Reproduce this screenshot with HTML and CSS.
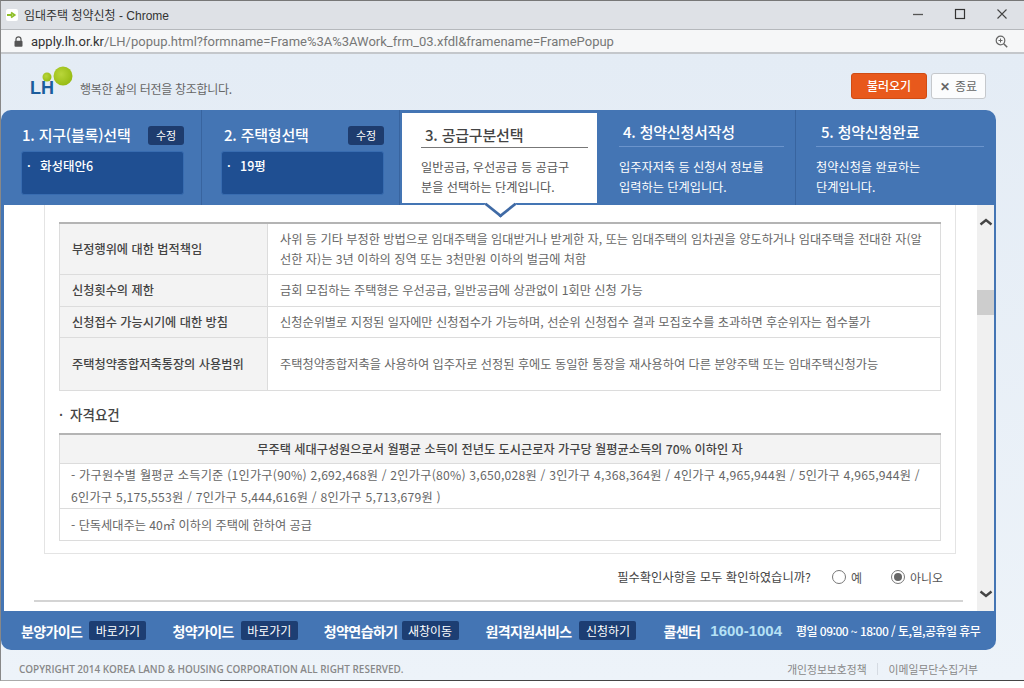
FILE: index.html
```html
<!DOCTYPE html>
<html lang="ko">
<head>
    <meta charset="UTF-8">
    <meta name="viewport" content="width=device-width, initial-scale=1.0">
    <title>임대주택 청약신청 - Chrome</title>
    <link rel="stylesheet" href="styles.css">
</head>
<body>
<div class="window">

    <!-- 타이틀바 -->
    <div class="titlebar">
        <span class="favicon">
            <svg width="10" height="8" viewBox="0 0 10 8"><path d="M0 4h5M4 1.500l3.500 2.500L4 6.500" fill="none" stroke="#8fbf2a" stroke-width="2"/></svg>
        </span>
        <span class="title">임대주택 청약신청 - Chrome</span>
        <div class="winbtns">
            <svg width="12" height="12" viewBox="0 0 12 12"><path d="M1 6.500h10" stroke="#555" stroke-width="1.300"/></svg>
            <svg width="12" height="12" viewBox="0 0 12 12"><rect x="1.500" y="1.500" width="9" height="9" fill="none" stroke="#333" stroke-width="1.200"/></svg>
            <svg width="12" height="12" viewBox="0 0 12 12"><path d="M1.500 1.500l9 9M10.500 1.500l-9 9" stroke="#444" stroke-width="1.100"/></svg>
        </div>
    </div>

    <!-- 주소창 -->
    <div class="addressbar">
        <svg class="lock" width="9" height="11" viewBox="0 0 9 11"><path d="M2 5V3.300a2.500 2.500 0 0 1 5 0V5" fill="none" stroke="#555" stroke-width="1.200"/><rect x="0.500" y="4.800" width="8" height="6" rx="1" fill="#555"/></svg>
        <span class="url"><b>apply.lh.or.kr</b>/LH/popup.html?formname=Frame%3A%3AWork_frm_03.xfdl&amp;framename=FramePopup</span>
        <svg class="zoom" width="13" height="13" viewBox="0 0 13 13"><circle cx="5.500" cy="5.500" r="4.300" fill="none" stroke="#666" stroke-width="1.200"/><path d="M8.700 8.700l3.500 3.500" stroke="#666" stroke-width="1.500"/><path d="M3.500 5.500h4M5.500 3.500v4" stroke="#666"/></svg>
    </div>

    <div class="page">

        <!-- 상단 로고 -->
        <div class="top">
            <div class="logo">
                <svg class="logo-dots" width="34" height="24" viewBox="0 0 34 24">
                    <defs>
                        <radialGradient id="ball" cx="0.400" cy="0.400" r="0.700">
                            <stop offset="0" stop-color="#b9d63a"/>
                            <stop offset="1" stop-color="#93b80f"/>
                        </radialGradient>
                    </defs>
                    <circle cx="5" cy="11" r="4.500" fill="url(#ball)"/>
                    <circle cx="21" cy="10" r="9.500" fill="url(#ball)"/>
                </svg>
                <span class="logo-lh">LH</span>
            </div>
            <span class="slogan">행복한 삶의 터전을 창조합니다.</span>
            <div class="top-btns">
                <span class="btn-load">불러오기</span>
                <span class="btn-close"><i>✕</i>종료</span>
            </div>
        </div>

        <!-- 단계 -->
        <div class="panel">
            <div class="steps">
                <div class="step step-done">
                    <div class="step-head"><h3>1. 지구(블록)선택</h3><span class="edit">수정</span></div>
                    <div class="picked"><span>·</span>화성태안6</div>
                </div>
                <div class="step step-done">
                    <div class="step-head"><h3>2. 주택형선택</h3><span class="edit">수정</span></div>
                    <div class="picked"><span>·</span>19평</div>
                </div>
                <div class="step step-on">
                    <h3>3. 공급구분선택</h3>
                    <p>일반공급, 우선공급 등 공급구<br>분을 선택하는 단계입니다.</p>
                </div>
                <div class="step step-next">
                    <h3>4. 청약신청서작성</h3>
                    <p>입주자저축 등 신청서 정보를<br>입력하는 단계입니다.</p>
                </div>
                <div class="step step-next step-last">
                    <h3>5. 청약신청완료</h3>
                    <p>청약신청을 완료하는<br>단계입니다.</p>
                </div>
            </div>

            <!-- 본문 -->
            <div class="body">
                <div class="scroll">
                    <div class="box">
                        <table class="info">
                            <tr class="r1">
                                <th>부정행위에 대한 법적책임</th>
                                <td>사위 등 기타 부정한 방법으로 임대주택을 임대받거나 받게한 자, 또는 임대주택의 임차권을 양도하거나 임대주택을 전대한 자(알<br>선한 자)는 3년 이하의 징역 또는 3천만원 이하의 벌금에 처함</td>
                            </tr>
                            <tr class="r2">
                                <th>신청횟수의 제한</th>
                                <td>금회 모집하는 주택형은 우선공급, 일반공급에 상관없이 1회만 신청 가능</td>
                            </tr>
                            <tr class="r3">
                                <th>신청접수 가능시기에 대한 방침</th>
                                <td>신청순위별로 지정된 일자에만 신청접수가 가능하며, 선순위 신청접수 결과 모집호수를 초과하면 후순위자는 접수불가</td>
                            </tr>
                            <tr class="r4">
                                <th>주택청약종합저축통장의 사용범위</th>
                                <td>주택청약종합저축을 사용하여 입주자로 선정된 후에도 동일한 통장을 재사용하여 다른 분양주택 또는 임대주택신청가능</td>
                            </tr>
                        </table>

                        <h4><span>·</span>자격요건</h4>

                        <table class="req">
                            <tr class="q1"><th>무주택 세대구성원으로서 월평균 소득이 전년도 도시근로자 가구당 월평균소득의 70% 이하인 자</th></tr>
                            <tr class="q2"><td>- 가구원수별 월평균 소득기준 (1인가구(90%) 2,692,468원 / 2인가구(80%) 3,650,028원 / 3인가구 4,368,364원 / 4인가구 4,965,944원 / 5인가구 4,965,944원 /<br>6인가구 5,175,553원 / 7인가구 5,444,616원 / 8인가구 5,713,679원 )</td></tr>
                            <tr class="q3"><td>- 단독세대주는 40㎡ 이하의 주택에 한하여 공급</td></tr>
                        </table>
                    </div>

                    <div class="confirm">
                        <span class="confirm-q">필수확인사항을 모두 확인하였습니까?</span>
                        <label><span class="radio"></span>예</label>
                        <label><span class="radio radio-on"></span>아니오</label>
                    </div>
                    <div class="rule"></div>
                </div>

                <div class="scrollbar">
                    <svg width="14" height="10" viewBox="0 0 14 10"><path d="M1.500 7.500l5.500-4.500 5.500 4.500" fill="none" stroke="#444" stroke-width="2.400"/></svg>
                    <div class="thumb"></div>
                    <svg class="down" width="14" height="10" viewBox="0 0 14 10"><path d="M1.500 2.500l5.500 4.500 5.500-4.500" fill="none" stroke="#444" stroke-width="2.400"/></svg>
                </div>
            </div>

            <!-- 하단 바 -->
            <div class="guide">
                <b>분양가이드</b><span class="go">바로가기</span>
                <b class="g2">청약가이드</b><span class="go">바로가기</span>
                <b class="g3">청약연습하기</b><span class="go go-near">새창이동</span>
                <b class="g4">원격지원서비스</b><span class="go go-mid">신청하기</span>
                <b class="g5">콜센터</b>
                <strong>1600-1004</strong>
                <em>평일 09:00 ~ 18:00 / 토,일,공휴일 휴무</em>
            </div>
        </div>

        <!-- 카피라이트 -->
        <div class="copy">
            <span class="copy-text">COPYRIGHT 2014 KOREA LAND &amp; HOUSING CORPORATION ALL RIGHT RESERVED.</span>
            <span class="links"><span>개인정보보호정책</span><span class="sep"></span><span>이메일무단수집거부</span></span>
        </div>
    </div>
</div>
</body>
</html>
```

FILE: styles.css
```css
* {
    box-sizing: border-box;
}
html, body {
    margin: 0;
    height: 688px;
    overflow: hidden;
    background-color: #fff;
}
body {
    font-family: "Noto Sans CJK KR", "Liberation Sans", sans-serif;
    font-size: 12px;
    color: #555;
}
h3, h4, p {
    margin: 0;
}
.window {
    height: 681px;
    border-top: 1px solid #777;
    border-left: 1px solid #888;
    border-bottom: 1px solid #aaa;
    display: flex;
    flex-direction: column;
    position: relative;
}
.window::after {
    content: "";
    position: absolute;
    left: 219px;
    right: 0;
    bottom: -1px;
    height: 1px;
    background-color: #444;
}

/* 타이틀바 */
.titlebar {
    height: 28px;
    background-color: #dee1e6;
    display: flex;
    align-items: center;
    padding-left: 5px;
}
.favicon {
    width: 12px;
    height: 12px;
    background-color: #fff;
    border-radius: 2px;
    display: flex;
    align-items: center;
    justify-content: center;
}
.title {
    margin-left: 6px;
    padding-bottom: 2px;
    font-family: "Liberation Sans", "Noto Sans CJK KR", sans-serif;
    font-size: 12px;
    color: #333;
}
.winbtns {
    margin-left: auto;
    margin-right: 16px;
    display: flex;
    gap: 30px;
    margin-top: -2px;
}

/* 주소창 */
.addressbar {
    height: 25px;
    background-color: #f6f7f8;
    border-top: 1px solid #b5b8bc;
    border-bottom: 2px solid #c4c7cb;
    display: flex;
    align-items: center;
    padding-left: 13px;
    padding-right: 16px;
}
.url {
    margin-left: 8px;
    font-family: "Roboto", "Liberation Sans", sans-serif;
    font-size: 13px;
    color: #777;
}
.url b {
    font-weight: 400;
    color: #333;
}
.zoom {
    margin-left: auto;
}

/* 상단 */
.page {
    flex: 1;
    display: flex;
    flex-direction: column;
    background: linear-gradient(#e4ecf5, #edf3f9);
}
.top {
    height: 56px;
    display: flex;
    position: relative;
    padding-left: 29px;
    padding-right: 38px;
}
.logo {
    width: 50px;
    position: relative;
}
.logo-dots {
    position: absolute;
    left: 12px;
    top: 12px;
}
.logo-lh {
    position: absolute;
    left: 0;
    top: 24px;
    font-family: "Liberation Sans", sans-serif;
    font-weight: bold;
    font-size: 18px;
    color: #1b5c9c;
}
.slogan {
    margin-top: 26px;
    font-size: 12px;
    letter-spacing: -0.300px;
    color: #666;
}
.top-btns {
    margin-left: auto;
    margin-top: 19px;
    display: flex;
    gap: 4px;
    height: 26px;
}
.btn-load {
    width: 76px;
    background-color: #e8591c;
    border: 1px solid #cf4c14;
    border-radius: 3px;
    color: #fff;
    font-size: 12px;
    font-weight: 500;
    text-align: center;
    line-height: 24px;
}
.btn-close {
    width: 55px;
    background-color: #fbfcfd;
    border: 1px solid #c5c8cc;
    border-radius: 3px;
    color: #666;
    font-size: 12px;
    text-align: center;
    line-height: 24px;
}
.btn-close i {
    font-style: normal;
    font-weight: bold;
    margin-right: 5px;
}

/* 단계 패널 */
.panel {
    width: 995px;
    background-color: #4475b4;
    border-radius: 10px;
}
.steps {
    height: 95px;
    display: flex;
    color: #fff;
}
.step {
    border-right: 1px solid #38649f;
}
.step h3 {
    font-size: 15px;
    font-weight: 500;
    line-height: 22px;
    letter-spacing: -0.200px;
}
.step-done {
    width: 201px;
    padding-top: 14px;
    padding-left: 21px;
}
.step-done + .step-done {
    width: 198px;
    padding-left: 20px;
}
.step-head {
    display: flex;
    align-items: center;
    height: 22px;
    width: 162px;
    justify-content: space-between;
}
.step-done + .step-done .step-head {
    padding-left: 2px;
}
.edit {
    width: 36px;
    height: 19px;
    background-color: #1e3c6e;
    border-radius: 3px;
    font-size: 11px;
    line-height: 19px;
    text-align: center;
}
.picked {
    margin-top: 5px;
    margin-left: -1px;
    width: 163px;
    height: 44px;
    background-color: #1f4f92;
    border: 1px solid #386cb0;
    border-radius: 3px;
    padding-left: 5px;
    padding-top: 4px;
    font-size: 12.500px;
    font-weight: 500;
    line-height: 20px;
}
.picked span {
    display: inline-block;
    width: 13px;
}
.step-on {
    width: 195px;
    height: 90px;
    margin: 3px 0 0 2px;
    background-color: #fff;
    color: #555;
    padding: 11px 9px 0 19px;
    position: relative;
    border-right: none;
}
.step-on h3 {
    color: #444;
    padding-left: 4px;
    border-bottom: 1px solid #777;
    height: 24px;
}
.step-on::after {
    content: "";
    position: absolute;
    left: 87px;
    bottom: -13px;
    width: 20px;
    height: 20px;
    background-color: #fff;
    border-right: 3px solid #3f6aa5;
    border-bottom: 3px solid #3f6aa5;
    transform: scaleY(0.8) rotate(45deg);
    z-index: 2;
}
.step p {
    font-size: 12.200px;
    line-height: 20px;
    margin-top: 9px;
}
.step-next {
    width: 199px;
    padding: 11px 11px 0 22px;
}
.step-next h3 {
    height: 26px;
    padding-left: 4px;
    border-bottom: 1px solid #6b94cc;
}
.step-next p {
    margin-top: 10px;
}
.step-last {
    border-right: none;
    width: 200px;
    padding: 11px 12px 0 20px;
}
.step-last h3 {
    padding-left: 5px;
}

/* 본문 */
.body {
    height: 406px;
    margin: 0 2px 0 3px;
    background-color: #fff;
    display: flex;
    overflow: hidden;
}
.scroll {
    width: 973px;
    padding-left: 30px;
    padding-right: 6px;
}
.box {
    margin-left: 10px;
    width: 912px;
    height: 349px;
    border-left: 1px solid #e4e4e4;
    border-right: 1px solid #e4e4e4;
    border-bottom: 1px solid #e4e4e4;
    padding: 17px 14px 0;
}
table {
    width: 882px;
    border-collapse: collapse;
    border-top: 2px solid #b4b4b4;
    table-layout: fixed;
    color: #666;
    font-size: 12.200px;
}
th, td {
    border: 1px solid #dcdcdc;
    padding: 0;
}
th {
    background-color: #f3f3f3;
    color: #444;
    font-weight: 500;
}
.info th {
    width: 208px;
    text-align: left;
    padding-left: 12px;
}
.info td {
    padding: 0 12px;
    line-height: 20px;
}
.r1 { height: 51px; }
.r2 { height: 32px; }
.r3 { height: 31px; }
.r4 { height: 53px; }
h4 {
    font-size: 13.500px;
    font-weight: 500;
    color: #444;
    margin-top: 11px;
    height: 31px;
    line-height: 24px;
}
h4 span {
    margin-right: 7px;
}
.req th {
    text-align: center;
}
.req td {
    padding-left: 11px;
    padding-right: 10px;
    line-height: 22px;
}
.q1 { height: 30px; }
.q2 { height: 44px; }
.q2 td {
    letter-spacing: 0.220px;
}
.q3 { height: 32px; }
.confirm {
    height: 46px;
    display: flex;
    align-items: center;
    justify-content: flex-end;
    padding-right: 28px;
    color: #555;
}
.confirm-q {
    margin-right: 21px;
    font-size: 12.300px;
    color: #444;
}
.confirm label {
    display: flex;
    align-items: center;
    min-width: 59px;
}
.confirm label:last-child {
    min-width: 0;
}
.radio {
    width: 14px;
    height: 14px;
    border: 1px solid #777;
    border-radius: 50%;
    margin-right: 5px;
    background-color: #fff;
    position: relative;
}
.radio-on::after {
    content: "";
    position: absolute;
    left: 2px;
    top: 2px;
    width: 8px;
    height: 8px;
    border-radius: 50%;
    background-color: #666;
}
.rule {
    margin-right: 8px;
    height: 2px;
    background-color: #d4d4d4;
}
.scrollbar {
    width: 17px;
    margin-left: auto;
    background-color: #f0f0f0;
    display: flex;
    flex-direction: column;
    align-items: center;
}
.scrollbar svg {
    margin-top: 12px;
}
.thumb {
    width: 17px;
    height: 25px;
    margin-top: 63px;
    background-color: #cdcdcd;
}
.scrollbar .down {
    margin-top: auto;
    margin-bottom: 12px;
}

/* 하단 바 */
.guide {
    height: 39px;
    border-radius: 0 0 10px 10px;
    display: flex;
    align-items: center;
    padding-left: 20px;
    color: #fff;
    font-size: 14px;
    white-space: nowrap;
}
.guide b {
    font-weight: 700;
    letter-spacing: -0.600px;
}
.go {
    margin-left: 7px;
    width: 57px;
    height: 19px;
    background-color: #1d3e73;
    border-radius: 2px;
    font-size: 12px;
    line-height: 19px;
    text-align: center;
    flex: none;
}
.go-near { margin-left: 4px; }
.go-mid { margin-left: 8px; }
.g2, .g3 { margin-left: 26px; }
.g4, .g5 { margin-left: 27px; }
.guide strong {
    margin-left: 10px;
    font-family: "Liberation Sans", sans-serif;
    font-size: 15px;
    color: #b5e1f5;
}
.guide em {
    margin-left: 14px;
    font-style: normal;
    font-weight: 500;
    font-size: 12px;
    letter-spacing: -0.550px;
}

/* 카피라이트 */
.copy {
    flex: 1;
    width: 995px;
    display: flex;
    justify-content: space-between;
    align-items: center;
    padding: 7px 18px 0 18px;
    color: #888;
}
.copy-text {
    font-family: "Open Sans", "Liberation Sans", sans-serif;
    font-weight: 600;
    font-size: 9.950px;
}
.links {
    display: flex;
    align-items: center;
    font-size: 10.800px;
}
.sep {
    width: 1px;
    height: 12px;
    margin: 0 11px 0 10px;
    background-color: #d5dbe2;
}
```
